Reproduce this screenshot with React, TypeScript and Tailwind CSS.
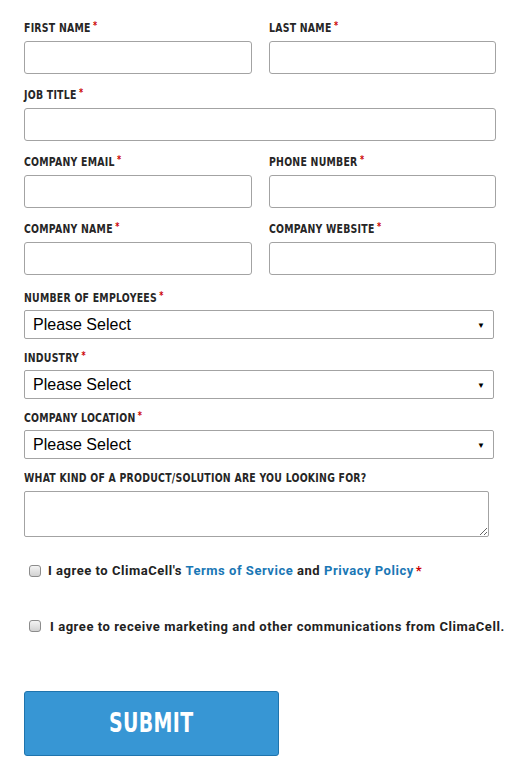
const labelFont = "font-['DejaVu_Sans_Condensed','DejaVu_Sans',sans-serif]";

function Label({ text, required = true }: { text: string; required?: boolean }) {
    return (
        <div className={`h-[18px] pt-[4px] leading-[13px] text-[13px] font-bold uppercase text-[#262626] ${labelFont}`}>
            <span className="inline-block origin-left scale-x-[0.8] whitespace-nowrap tracking-[0.3px]">
                {text}
                {required && <span className="ml-[3px] align-top text-[11px] leading-[10px] text-[#cc0000]">*</span>}
            </span>
        </div>
    );
}

function TextField({ label }: { label: string }) {
    return (
        <div className="flex flex-col">
            <Label text={label} />
            <input
                type="text"
                className="mt-[6px] h-[33px] w-full rounded-[3px] border border-[#a3a3a3] bg-white px-2 outline-none"
            />
        </div>
    );
}

function SelectField({ label }: { label: string }) {
    return (
        <div className="flex flex-col">
            <Label text={label} />
            <div className="mt-[5px] flex h-[29px] w-[470px] items-center rounded-[2px] border border-[#a3a3a3] bg-white pl-[8px] pr-2">
                <span className="font-['Liberation_Sans',Arial,sans-serif] text-[16px] leading-none text-black">
                    Please Select
                </span>
                <span className="ml-auto text-[8px] leading-none text-black">▼</span>
            </div>
        </div>
    );
}

function Checkbox() {
    return (
        <input
            type="checkbox"
            className="h-[12px] w-[12px] shrink-0 appearance-none rounded-[3px] border border-[#8c8c8c] bg-linear-to-b from-[#f4f4f4] to-[#d2d2d2]"
        />
    );
}

export default function App() {
    return (
        <div className="min-h-[766px] w-[519px] bg-white pl-[24px] pt-[17px]">
            <div className="grid w-[472px] grid-cols-2 gap-x-[17px] gap-y-[10px]">
                <TextField label="First Name" />
                <TextField label="Last Name" />
                <div className="col-span-2">
                    <TextField label="Job Title" />
                </div>
                <TextField label="Company Email" />
                <TextField label="Phone Number" />
                <TextField label="Company Name" />
                <TextField label="Company Website" />
            </div>

            <div className="mt-[12px] flex flex-col gap-[8px]">
                <SelectField label="Number of Employees" />
                <SelectField label="Industry" />
                <SelectField label="Company Location" />
            </div>

            <div className="mt-[8px] flex flex-col">
                <Label text="What kind of a product/solution are you looking for?" required={false} />
                <textarea className="mt-[6px] h-[46px] w-[465px] rounded-[2px] border border-[#a3a3a3] bg-white outline-none" />
            </div>

            <div className="mt-[24px] flex flex-col gap-[36px] font-['Roboto',sans-serif] text-[13px] font-bold text-[#222222]">
                <label className="flex items-center pl-[5px]">
                    <Checkbox />
                    <span className="ml-[7px] tracking-[0.53px]">
                        I agree to ClimaCell's{" "}
                        <a className="text-[#1a77b5]">Terms of Service</a> and{" "}
                        <a className="text-[#1a77b5]">Privacy Policy</a>
                        <span className="ml-[2px] text-[#cc0000]">*</span>
                    </span>
                </label>
                <label className="flex items-center pl-[5px]">
                    <Checkbox />
                    <span className="ml-[9px] tracking-[0.55px]">
                        I agree to receive marketing and other communications from ClimaCell.
                    </span>
                </label>
            </div>

            <button
                type="button"
                className={`mt-[55px] flex h-[65px] w-[255px] items-center justify-center rounded-[3px] border border-[#1f74ad] bg-[#3796d4] text-[27px] font-bold uppercase text-white ${labelFont}`}
            >
                <span className="inline-block scale-x-[0.78] tracking-[0.5px]">Submit</span>
            </button>
        </div>
    );
}
